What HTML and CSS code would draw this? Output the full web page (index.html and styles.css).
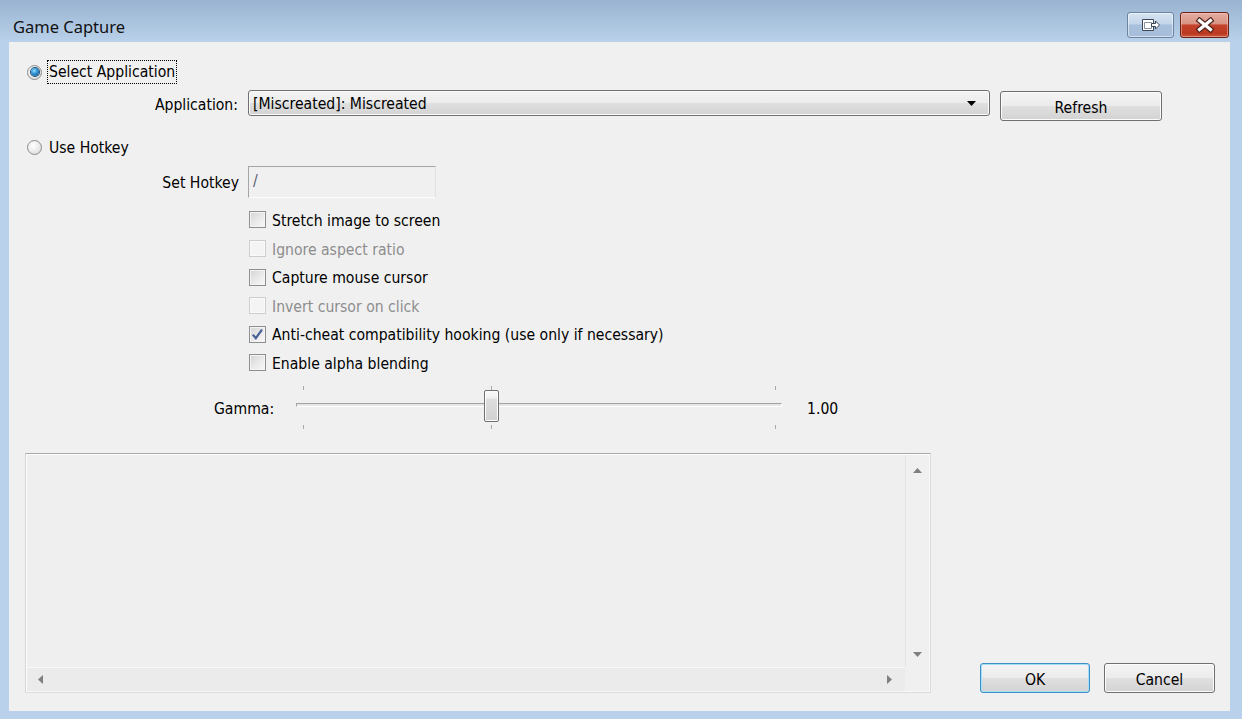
FILE: index.html
```html
<!DOCTYPE html>
<html lang="en">
<head>
  <meta charset="UTF-8">
  <title>Game Capture</title>
  <link rel="stylesheet" href="styles.css">
</head>
<body>
  <div class="window">
    <div class="titlebar">
      <span class="title">Game Capture</span>
      <div class="caption-buttons">
        <div class="cap-btn cap-tray">
          <svg width="20" height="14" viewBox="0 0 20 14">
            <path d="M1.5 1.5h11v11h-11z" fill="#fff" stroke="#3a4557"/>
            <path d="M3.5 4.5h7v6h-7z" fill="none" stroke="#8793a4"/>
            <path d="M10.5 5.5h4v-2.5l4 4-4 4v-2.5h-4z" fill="#fff" stroke="#3a4557"/>
          </svg>
        </div>
        <div class="cap-btn cap-close">
          <svg width="20" height="16" viewBox="0 0 20 16">
            <path d="M4.5 3.5L15.5 12.5M15.5 3.5L4.5 12.5" stroke="#4e2219" stroke-width="5.5" stroke-linecap="square"/>
            <path d="M4.5 3.5L15.5 12.5M15.5 3.5L4.5 12.5" stroke="#fff" stroke-width="3.2" stroke-linecap="square"/>
          </svg>
        </div>
      </div>
    </div>

    <div class="client">
      <div class="top">
        <div class="radio-row">
          <span class="radio checked"></span>
          <span class="focus">Select Application</span>
        </div>

        <div class="field-row app-row">
          <span class="field-label">Application:</span>
          <div class="combo">
            <span>[Miscreated]: Miscreated</span>
            <svg width="9" height="5" viewBox="0 0 9 5"><polygon points="0,0 9,0 4.5,5" fill="#000"/></svg>
          </div>
          <div class="btn refresh">Refresh</div>
        </div>

        <div class="radio-row second">
          <span class="radio"></span>
          <span class="radio-text">Use Hotkey</span>
        </div>

        <div class="field-row hotkey-row">
          <span class="field-label">Set Hotkey</span>
          <div class="hotkey">/</div>
        </div>

        <ul class="checks">
          <li><span class="check"></span><span>Stretch image to screen</span></li>
          <li class="disabled"><span class="check"></span><span>Ignore aspect ratio</span></li>
          <li><span class="check"></span><span>Capture mouse cursor</span></li>
          <li class="disabled"><span class="check"></span><span>Invert cursor on click</span></li>
          <li>
            <span class="check">
              <svg width="15" height="15" viewBox="0 0 15 15"><path d="M2.8 7.6L5.8 11.2L12 2.6" fill="none" stroke="#4a5f97" stroke-width="2.2"/></svg>
            </span><span>Anti-cheat compatibility hooking (use only if necessary)</span>
          </li>
          <li><span class="check"></span><span>Enable alpha blending</span></li>
        </ul>

        <div class="gamma-row">
          <span class="gamma-label">Gamma:</span>
          <div class="slider">
            <span class="tick up t-left"></span>
            <span class="tick up t-mid"></span>
            <span class="tick up t-right"></span>
            <div class="track"></div>
            <span class="tick down t-left"></span>
            <span class="tick down t-mid"></span>
            <span class="tick down t-right"></span>
            <div class="handle"></div>
          </div>
          <span class="gamma-value">1.00</span>
        </div>
      </div>

      <div class="bottom">
        <div class="preview">
          <div class="preview-area"></div>
          <div class="vscroll">
            <svg width="9" height="5" viewBox="0 0 9 5"><polygon points="0,5 4.5,0 9,5" fill="#7f7f7f"/></svg>
            <svg width="9" height="5" viewBox="0 0 9 5"><polygon points="0,0 9,0 4.5,5" fill="#7f7f7f"/></svg>
          </div>
          <div class="hscroll">
            <svg width="5" height="9" viewBox="0 0 5 9"><polygon points="5,0 5,9 0,4.5" fill="#7f7f7f"/></svg>
            <svg width="5" height="9" viewBox="0 0 5 9"><polygon points="0,0 5,4.5 0,9" fill="#7f7f7f"/></svg>
          </div>
          <div class="corner"></div>
        </div>

        <div class="actions">
          <div class="btn default">OK</div>
          <div class="btn cancel">Cancel</div>
        </div>
      </div>
    </div>
  </div>
</body>
</html>
```

FILE: styles.css
```css
body {
  margin: 0;
  font-family: "DejaVu Sans Condensed", "Liberation Sans", sans-serif;
  font-size: 15.6px;
  color: #000;
  background: #b9d1ea;
}

.window {
  width: 1242px;
  height: 719px;
  display: flex;
  flex-direction: column;
  background: linear-gradient(#99b3d0 0, #b9d1ea 42px, #b9d1ea 100%);
  overflow: hidden;
}

/* title bar */
.titlebar {
  height: 42px;
  flex-shrink: 0;
  display: flex;
  justify-content: space-between;
  align-items: flex-start;
}

.title {
  font-family: "Noto Sans", sans-serif;
  font-size: 16.5px;
  line-height: 22px;
  color: #111;
  margin: 16px 0 0 13px;
}

.caption-buttons {
  display: flex;
  gap: 6px;
  margin: 12px 13px 0 0;
}

.cap-btn {
  height: 26px;
  box-sizing: border-box;
  border-radius: 3px;
  display: flex;
  align-items: center;
  justify-content: center;
}

.cap-tray {
  width: 47px;
  border: 1px solid #6e83a0;
  background: linear-gradient(#d6e3f1 0%, #c5d6ea 45%, #a9c0dc 50%, #a6bedb 100%);
  box-shadow: inset 0 0 0 1px rgba(255, 255, 255, 0.5);
}

.cap-close {
  width: 49px;
  border: 1px solid #6a2218;
  background: linear-gradient(#e5ada1 0%, #d89585 45%, #c6442e 50%, #b9381f 85%, #cd5a42 100%);
  box-shadow: inset 0 0 0 1px rgba(255, 210, 200, 0.45);
}

/* client area */
.client {
  flex: 1;
  margin: 0 12px 8px 9px;
  background: #f0f0f0;
  display: flex;
  flex-direction: column;
}

.top {
  padding: 18px 0 0 18px;
}

.radio-row {
  height: 24px;
  display: flex;
  align-items: center;
}

.radio-row.second {
  margin-top: 14px;
}

.radio {
  width: 15px;
  height: 15px;
  box-sizing: border-box;
  border-radius: 50%;
  border: 1px solid #8a8c8c;
  background: radial-gradient(circle at 40% 35%, #ffffff 0%, #ececec 50%, #d2d2d2 100%);
  display: flex;
  align-items: center;
  justify-content: center;
  margin-right: 7px;
  flex-shrink: 0;
}

.radio.checked::after {
  content: "";
  width: 8px;
  height: 8px;
  border-radius: 50%;
  background: radial-gradient(circle at 40% 35%, #8fe0ff 0%, #2d8fd0 45%, #14507f 100%);
  box-shadow: 0 0 0 1px #1e4d73;
}

.focus {
  outline: 1px dotted #000;
  padding: 2px 1px;
  margin-left: -1px;
}

.radio-text {
  padding-top: 1px;
}

.field-row {
  display: flex;
  align-items: flex-start;
}

.field-label {
  width: 211px;
  margin-right: 10px;
  text-align: right;
}

.app-row {
  margin-top: 6px;
}

.app-row .field-label {
  line-height: 27px;
  padding-top: 2px;
}

.combo {
  width: 742px;
  height: 26px;
  box-sizing: border-box;
  border: 1px solid #707070;
  border-radius: 3px;
  padding: 2px 13px 0 4px;
  display: flex;
  align-items: center;
  justify-content: space-between;
  background: linear-gradient(#f4f4f4 0%, #ececec 48%, #dfdfdf 52%, #d3d3d3 100%);
  box-shadow: inset 0 0 0 1px #fbfbfb;
}

.combo svg {
  margin-top: -2px;
}

.btn {
  height: 30px;
  box-sizing: border-box;
  border: 1px solid #707070;
  border-radius: 3px;
  padding-top: 3px;
  display: flex;
  align-items: center;
  justify-content: center;
  background: linear-gradient(#f4f4f4 0%, #ececec 48%, #dfdfdf 52%, #d3d3d3 100%);
  box-shadow: inset 0 0 0 1px #fbfbfb;
}

.refresh {
  width: 162px;
  margin: 1px 0 0 10px;
}

.hotkey-row {
  margin-top: 7px;
}

.hotkey-row .field-label {
  line-height: 30px;
  padding-top: 2px;
  margin-right: 9px;
  width: 212px;
}

.hotkey {
  width: 188px;
  height: 32px;
  box-sizing: border-box;
  border: 1px solid;
  border-color: #a5a5a5 #e2e2e2 #fcfcfc #a5a5a5;
  padding: 0 4px;
  line-height: 28px;
  color: #5a6272;
  background: #f0f0f0;
}

/* checkboxes */
.checks {
  list-style: none;
  margin: 7.7px 0 0 222px;
  padding: 0;
}

.checks li {
  height: 28.6px;
  display: flex;
  align-items: center;
}

.checks li > span:last-child {
  padding-top: 2px;
}

.check {
  width: 17px;
  height: 17px;
  box-sizing: border-box;
  border: 1px solid #8e8f8f;
  background: linear-gradient(135deg, #d4d4d4 0%, #ececec 60%, #f8f8f8 100%);
  box-shadow: inset 0 0 0 1px #f4f4f4;
  margin-right: 6px;
  display: flex;
  align-items: center;
  justify-content: center;
  flex-shrink: 0;
}

.checks li.disabled {
  color: #8d8d8d;
}

.checks li.disabled .check {
  border-color: #cdcdcd;
  background: #f4f4f4;
  box-shadow: inset 0 0 0 1px #fafafa;
}

/* gamma slider */
.gamma-row {
  margin: 9px 0 0 187px;
  height: 44px;
  display: flex;
  align-items: center;
}

.gamma-label,
.gamma-value {
  padding-top: 2px;
}

.gamma-label {
  width: 82px;
}

.slider {
  position: relative;
  width: 486px;
  height: 44px;
}

.track {
  position: absolute;
  left: 0;
  right: 0;
  top: 17px;
  height: 4px;
  box-sizing: border-box;
  border: 1px solid;
  border-color: #a3a3a3 #ffffff #ffffff #a3a3a3;
  background: #e6e6e6;
}

.tick {
  position: absolute;
  width: 1px;
  height: 4px;
  background: #a8a8a8;
}

.tick.up { top: 0; }
.tick.down { top: 39px; }
.t-left { left: 7px; }
.t-mid { left: 195px; }
.t-right { left: 479px; }

.handle {
  position: absolute;
  left: 188px;
  top: 4px;
  width: 15px;
  height: 32px;
  box-sizing: border-box;
  border: 1px solid #707070;
  border-radius: 2px;
  background: linear-gradient(#fafafa 0%, #f0f0f0 24%, #dedede 27%, #d2d2d2 100%);
  box-shadow: inset 0 0 0 1px #fdfdfd;
}

.gamma-value {
  margin-left: 25px;
}

/* preview + buttons */
.bottom {
  margin-top: auto;
  padding: 0 15px 18px 16px;
  display: flex;
  justify-content: space-between;
  align-items: flex-end;
}

.preview {
  width: 906px;
  height: 240px;
  box-sizing: border-box;
  border: 1px solid;
  border-color: #a9a9a9 #dcdcdc #dcdcdc #d6d6d6;
  box-shadow: inset 1px 1px 0 #fdfdfd, inset -1px -1px 0 #f8f8f8;
  padding: 1px;
  display: grid;
  grid-template-columns: 1fr 24px;
  grid-template-rows: 1fr 24px;
  background: #efefef;
}

.vscroll {
  border-left: 1px solid #e4e4e4;
  background: #f0f0f0;
  display: flex;
  flex-direction: column;
  justify-content: space-between;
  align-items: center;
  padding: 13px 0 10px;
}

.hscroll {
  border-top: 1px solid #f9f9f9;
  background: #ebebeb;
  display: flex;
  justify-content: space-between;
  align-items: center;
  padding: 0 13px 0 11px;
}

.corner {
  background: #f0f0f0;
}

.actions {
  display: flex;
  gap: 14px;
}

.actions .btn {
  width: 110px;
}

.actions .cancel {
  width: 111px;
}

.btn.default {
  border-color: #3c8fc7;
  box-shadow: inset 0 0 0 1px #a6def5;
}
```
